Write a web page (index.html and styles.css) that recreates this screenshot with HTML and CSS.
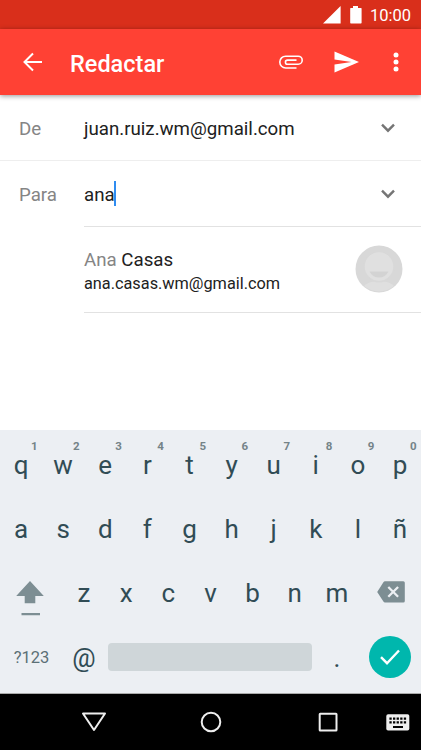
FILE: index.html
```html
<!DOCTYPE html>
<html lang="es">
<head>
  <meta charset="UTF-8" />
  <meta name="viewport" content="width=device-width, initial-scale=1.0" />
  <title>Redactar</title>
  <link rel="stylesheet" href="styles.css">
</head>
<body>

<div class="status">
  <svg width="18" height="18" viewBox="0 0 18 18"><path d="M17.6 0v17.6H0z"/></svg>
  <svg class="battery" width="12" height="18" viewBox="0 0 12 18"><path d="M3 0h5v2h3q.6 0 .6.6v14.2q0 .7-.7.7H.9q-.7 0-.7-.7V2.600q0-.6.6-.6H3z"/></svg>
  <span>10:00</span>
</div>

<header class="appbar">
  <svg class="back" width="20" height="20" viewBox="0 0 20 20"><path d="M19 10H2M10 1.500L1.500 10l8.500 8.500"/></svg>
  <h1>Redactar</h1>
  <svg class="clip" width="26" height="16" viewBox="0 0 26 16"><path d="M18.500 14H7.700a5.900 5.900 0 0 1 0-11.800h12.500a3.900 3.900 0 0 1 0 8H9.500a2.050 2.050 0 0 1 0-4.100h9"/></svg>
  <svg class="send" width="26" height="22" viewBox="0 0 26 22"><path d="M.5 .5L25 11 .5 21.500v-8L17.500 11 .5 8.500z"/></svg>
  <svg class="more" width="6" height="20" viewBox="0 0 6 20"><circle cx="3" cy="3" r="2.500"/><circle cx="3" cy="10" r="2.500"/><circle cx="3" cy="17" r="2.500"/></svg>
</header>

<main>
  <div class="row from">
    <label>De</label>
    <span class="value">juan.ruiz.wm@gmail.com</span>
    <svg class="chevron" width="16" height="10" viewBox="0 0 16 10"><path d="M2 1.700l6 6 6-6"/></svg>
  </div>
  <div class="row to">
    <label>Para</label>
    <span class="value">ana<i class="caret"></i></span>
    <svg class="chevron" width="16" height="10" viewBox="0 0 16 10"><path d="M2 1.700l6 6 6-6"/></svg>
  </div>

  <!-- contact suggestion -->
  <div class="contact">
    <div class="who">
      <p class="name"><span>Ana</span> Casas</p>
      <p class="mail">ana.casas.wm@gmail.com</p>
    </div>
    <svg class="avatar" width="48" height="48" viewBox="0 0 48 48">
      <circle cx="24" cy="24" r="23.500" fill="#d8d8d8"/>
      <path d="M9 41q4-4 10-4.500h10q6 .5 10 4.500a23.500 23.500 0 0 1-30 0z" fill="#dfdfdf"/>
      <circle cx="24" cy="22" r="15.500" fill="#d8d8d8"/>
      <circle cx="24" cy="21.500" r="14.300" fill="#e0e0e0"/>
      <path d="M14.500 26.500h19q-3 6-9.500 6t-9.500-6z" fill="#d3d3d3"/>
    </svg>
  </div>
</main>

<section class="keyboard">
  <div class="keys ten">
    <b>q<sup>1</sup></b><b>w<sup>2</sup></b><b>e<sup>3</sup></b><b>r<sup>4</sup></b><b>t<sup>5</sup></b><b>y<sup>6</sup></b><b>u<sup>7</sup></b><b>i<sup>8</sup></b><b>o<sup>9</sup></b><b>p<sup>0</sup></b>
  </div>
  <div class="keys ten">
    <b>a</b><b>s</b><b>d</b><b>f</b><b>g</b><b>h</b><b>j</b><b>k</b><b>l</b><b>ñ</b>
  </div>
  <div class="keys letters">
    <svg class="shift" width="28" height="36" viewBox="0 0 28 36"><path d="M14 0l13.800 15h-8.500v7.300H8.700V15H.2zM5.500 32H24v2.200H5.500z"/></svg>
    <b>z</b><b>x</b><b>c</b><b>v</b><b>b</b><b>n</b><b>m</b>
    <svg class="del" width="28" height="22" viewBox="0 0 28 22"><path fill="#7d8e93" d="M8 .3h18.300q1.500 0 1.500 1.500v18.100q0 1.500-1.500 1.500H8q-1 0-1.600-1L.2 10.900 6.400 1.300Q7 .3 8 .3z"/><path stroke="#eceff3" stroke-width="2.300" d="M11.300 6l9.800 9.800M21.100 6l-9.800 9.800"/></svg>
  </div>
  <div class="keys bottom">
    <b class="sym">?123</b>
    <b class="at">@</b>
    <div class="space"></div>
    <b>.</b>
    <div class="enter">
      <svg width="24" height="20" viewBox="0 0 24 20"><path d="M3 10.200l6 6L21 3.500"/></svg>
    </div>
  </div>
</section>

<nav>
  <svg class="nav-back" width="26" height="22" viewBox="0 0 26 22"><path d="M2 2.500h22L13 19z"/></svg>
  <svg class="nav-home" width="22" height="22" viewBox="0 0 22 22"><circle cx="11" cy="11" r="9.300"/></svg>
  <svg class="nav-recent" width="20" height="20" viewBox="0 0 20 20"><rect x="1.700" y="1.700" width="16.800" height="16.800" rx=".5"/></svg>
  <svg class="nav-kb" width="24" height="17" viewBox="0 0 24 17">
    <rect x=".3" y=".3" width="23" height="16.200" rx="1.800" fill="#eee"/>
    <path stroke="#000" stroke-width="2.200" stroke-dasharray="2.300 1.300" d="M3.400 4.600h17M3.400 8.300h17"/>
    <path stroke="#000" stroke-width="2" d="M7 13h10"/>
  </svg>
</nav>

</body>
</html>
```
FILE: styles.css
```css
:root { --red:#ff4134; --ink:#212121; --key:#314c55; --line:#e2e2e2; }
*     { box-sizing:border-box; margin:0; padding:0; }
body  { width:421px; height:750px; display:flex; flex-direction:column; overflow:hidden;
        font-family:Roboto,sans-serif; background:#fff; color:var(--ink); }
svg   { display:block; flex:none; fill:none; }

/* top bars */
.status { height:29px; flex:none; background:#d92f1b; color:#fff; display:flex; align-items:center;
          justify-content:flex-end; padding:1px 10px 0 0; font-size:16.5px; }
.status svg { fill:#fff; }
.status .battery { margin:0 8px 0 9px; }
.appbar { height:66px; flex:none; background:var(--red); color:#fff; display:flex; align-items:center;
          padding:0 22.5px 0 23px; box-shadow:0 1px 5px rgba(0,0,0,.42); position:relative; }
.appbar h1 { flex:1; font-size:23.5px; font-weight:500; margin-left:27px; padding-top:3px; }
.back   { stroke:#fff; stroke-width:2; }
.clip   { stroke:#fff; stroke-width:1.6; margin-right:30px; }
.send   { fill:#fff; margin-right:33px; }
.more   { fill:#fff; }

/* form rows */
main  { flex:1; }
.row  { height:66px; display:flex; align-items:center; padding:0 25px 0 19px; font-size:18.7px; }
.row label { width:65px; color:#858585; padding-top:2px; }
.from { border-bottom:1px solid #eee; }
.value { flex:1; display:flex; align-items:center; padding-top:2px; }
.to .value, .to label { padding-top:1px; }
.caret { width:2px; height:25px; margin:-2px 0 0 -1px; background:#2f8cf0; }
.chevron { stroke:#757575; stroke-width:2.4; }
.contact { margin-left:84px; height:87px; margin-top:-1px; display:flex; align-items:center; justify-content:space-between;
           border-top:1px solid var(--line); border-bottom:1px solid var(--line); padding-right:18px; }
.who  { padding-top:4px; }
.name { font-size:18.7px; line-height:24px; }
.name span { color:#858585; }
.mail { font-size:16.3px; line-height:24px; }
.avatar { margin-top:-1px; }

/* keyboard */
.keyboard { height:264px; flex:none; background:#eceff3; color:var(--key); padding-top:3px; border-bottom:1px solid #aaa; }
.keys   { height:64.2px; display:grid; align-items:center; justify-items:center; font-size:26px; }
.keys b { font-weight:400; position:relative; width:100%; text-align:center; }
.keys sup { position:absolute; right:4.5px; top:-11px; font-size:11.5px; line-height:14px; font-weight:700; color:#748388; }
.ten     { grid-template-columns:repeat(10,1fr); }
.letters { grid-template-columns:63px repeat(7,1fr) 63px; }
.bottom  { grid-template-columns:63px 42px 1fr 42px 63px; }
.shift   { fill:#7d8e93; margin:11px 4px 0 0; }
.del     { margin:-2px 0 0 3px; }
.keys .sym { font-size:16.5px; color:#5b6f76; }
.space   { width:204px; height:28px; margin:-2px 1px 0 0; border-radius:4px; background:#cfd6d9; }
.enter   { width:42px; height:42px; margin-top:-2px; border-radius:50%; background:#00b7ad; display:flex; align-items:center; justify-content:center; }
.enter svg { stroke:#fff; stroke-width:2.4; }

/* system navigation */
nav { height:56px; flex:none; background:#000; display:flex; align-items:center; padding:0 11px 0 81px; }
nav svg { stroke:#eee; stroke-width:2; stroke-linejoin:round; }
.nav-back { margin-right:92.5px; }
.nav-home { margin-right:96px; }
.nav-recent { margin-right:auto; }
.nav-kb { stroke:none; }
```
